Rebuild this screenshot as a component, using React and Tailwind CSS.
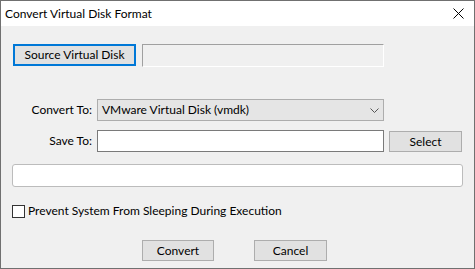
import React from "react";

const font = { fontFamily: "Lato, 'Liberation Sans', sans-serif" };

export default function App() {
  return (
    <div
      className="w-[475px] h-[269px] border border-[#707070] flex flex-col bg-[#f0f0f0] text-[12px] text-black"
      style={font}
    >
      <div className="h-[25px] bg-white flex items-center justify-between pl-[4px] pr-[10px] shrink-0">
        <span className="leading-none">Convert Virtual Disk Format</span>
        <svg width="11" height="11" viewBox="0 0 11 11" className="block">
          <path d="M0.5 0.5 L10.5 10.5 M10.5 0.5 L0.5 10.5" stroke="#000" strokeWidth="1" fill="none" />
        </svg>
      </div>
      <div className="flex flex-col">
        <div className="flex items-start mt-[18px] ml-[12px] gap-[6px]">
          <div className="w-[123px] h-[22px] border-2 border-[#0078d7] bg-[#e1e1e1] flex items-center justify-center">
            Source Virtual Disk
          </div>
          <div className="w-[242px] h-[23px] border border-t-[#a0a0a0] border-l-[#a0a0a0] border-b-white border-r-white bg-[#f0f0f0]" />
        </div>
        <div className="flex items-center mt-[32px] gap-[5px]">
          <div className="w-[91px] text-right">Convert To:</div>
          <div className="w-[287px] h-[22px] border border-[#adadad] bg-[#e5e5e5] flex items-center justify-between pl-[4px] pr-[4px]">
            <span>VMware Virtual Disk (vmdk)</span>
            <svg width="9" height="5" viewBox="0 0 9 5" className="block">
              <path d="M0.5 0.5 L4.5 4.5 L8.5 0.5" stroke="#555" strokeWidth="1" fill="none" />
            </svg>
          </div>
        </div>
        <div className="flex items-start mt-[9px] gap-[5px]">
          <div className="w-[91px] text-right h-[22px] flex items-center justify-end">Save To:</div>
          <div className="w-[287px] h-[22px] border border-[#7a7a7a] bg-white" />
          <div className="w-[73px] h-[21px] mt-[1px] border border-[#adadad] bg-[#e1e1e1] flex items-center justify-center">
            Select
          </div>
        </div>
        <div className="ml-[11px] mt-[12px] w-[451px] h-[23px] rounded-[3px] border border-[#bcbcbc] bg-white" />
        <div className="flex items-center ml-[11px] mt-[15px] gap-[3px]">
          <div className="w-[13px] h-[13px] border border-[#333] bg-white" />
          <span>Prevent System From Sleeping During Execution</span>
        </div>
        <div className="flex items-start ml-[141px] mt-[20px] gap-[40px]">
          <div className="w-[72px] h-[21px] border border-[#adadad] bg-[#e1e1e1] flex items-center justify-center">
            Convert
          </div>
          <div className="w-[73px] h-[21px] border border-[#adadad] bg-[#e1e1e1] flex items-center justify-center">
            Cancel
          </div>
        </div>
      </div>
    </div>
  );
}
